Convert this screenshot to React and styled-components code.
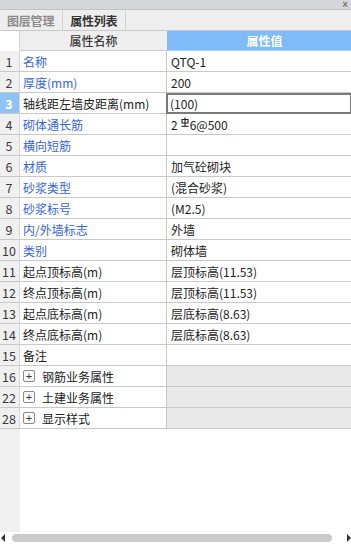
import styled, { createGlobalStyle } from "styled-components";

const Global = createGlobalStyle`
  html, body { margin: 0; padding: 0; background: #ffffff; }
  body { font-family: "Noto Sans CJK SC", "Liberation Sans", sans-serif; font-size: 12px; color: #222; }
`;

const Window = styled.div`
  width: 351px;
  height: 544px;
  display: flex;
  flex-direction: column;
  overflow: hidden;
  background: #ffffff;
`;

const TitleBar = styled.div`
  height: 9px;
  background: #d6d7db;
  border-bottom: 1px solid #c2c3c7;
  display: flex;
  justify-content: flex-end;
  align-items: center;
  padding-right: 3px;
`;

const CloseMark = styled.span`
  color: #777;
  font-size: 10px;
  font-weight: bold;
  line-height: 9px;
  font-family: "Liberation Sans", sans-serif;
`;

const TabBar = styled.div`
  height: 20px;
  background: #eeeeee;
  border-bottom: 1px solid #c9c9c9;
  display: flex;
`;

const Tab = styled.div`
  padding: 0 8px 0 7px;
  display: flex;
  align-items: center;
  font-size: 12px;
  font-weight: 700;
  color: ${(p) => (p.$active ? "#333333" : "#8c8c8c")};
  border-right: 1px solid #d2d2d2;
  letter-spacing: -0.2px;
`;

const Viewport = styled.div`
  flex: 1;
  display: flex;
  flex-direction: column;
  overflow: hidden;
`;

const Table = styled.div`
  width: 362px;
  flex: 1;
  display: flex;
  flex-direction: column;
`;

const Row = styled.div`
  display: grid;
  grid-template-columns: 20px 147px 195px;
  height: ${(p) => (p.$header ? 20 : 21)}px;
`;

const Gutter = styled.div`
  background: ${(p) => (p.$selected ? "#8fc2f6" : p.$blank ? "#ffffff" : "#f0f0f0")};
  color: ${(p) => (p.$selected ? "#ffffff" : "#3a3a3a")};
  font-weight: ${(p) => (p.$selected ? 700 : 400)};
  font-size: 12.5px;
  display: flex;
  align-items: center;
  justify-content: center;
  padding-right: 1px;
  border-bottom: 1px solid ${(p) => (p.$blank ? "#ffffff" : "#c8c8c8")};
  border-right: 1px solid #d6d6d6;
  box-sizing: border-box;
`;

const HeadCell = styled.div`
  background: ${(p) => (p.$value ? "#7fbbf8" : "#eeeeee")};
  color: ${(p) => (p.$value ? "#ffffff" : "#3a3a3a")};
  font-weight: ${(p) => (p.$value ? 700 : 500)};
  font-size: 12px;
  display: flex;
  align-items: center;
  justify-content: center;
  border-bottom: 1px solid ${(p) => (p.$value ? "#a9cff7" : "#cfcfcf")};
  box-sizing: border-box;
`;

const NameCell = styled.div`
  color: ${(p) => (p.$blue ? "#3565e0" : "#222222")};
  font-size: 12px;
  display: flex;
  align-items: center;
  gap: 7px;
  padding-left: 3px;
  border-bottom: 1px solid #c8c8c8;
  border-right: 1px solid #c8c8c8;
  box-sizing: border-box;
  white-space: nowrap;
`;

const ValueCell = styled.div`
  background: ${(p) => (p.$group ? "#e9e9e9" : "#ffffff")};
  font-size: 12px;
  color: #222;
  display: flex;
  align-items: center;
  padding-left: ${(p) => (p.$selected ? 2 : 4)}px;
  border-bottom: 1px solid #c8c8c8;
  box-sizing: border-box;
  white-space: nowrap;
  ${(p) => p.$selected && "border: 2px solid #7b7b7b; margin-left: -1px; width: 186px;"}
`;

const PlusBox = styled.span`
  width: 10px;
  height: 10px;
  border: 1px solid #8a8a8a;
  border-radius: 2px;
  display: inline-flex;
  align-items: center;
  justify-content: center;
  font-size: 11px;
  line-height: 10px;
  color: #333;
  background: #fbfbfb;
  font-family: "Liberation Sans", sans-serif;
`;

const Filler = styled.div`
  flex: 1;
  display: grid;
  grid-template-columns: 20px 1fr;
`;

const FillGutter = styled.div`
  background: #f0f0f0;
`;

const ScrollBar = styled.div`
  height: 12px;
  display: flex;
  align-items: center;
  gap: 2px;
  padding: 0 0 0 1px;
`;

const Thumb = styled.div`
  flex: 1;
  height: 8px;
  margin: 0 12px 0 4px;
  border-radius: 4px;
  background: #cacaca;
`;

const Rebar = () => (
  <svg width="8" height="10" viewBox="0 0 8 10" style={{ margin: "0 1px 4px 3px" }}>
    <path d="M4 0.5V9M1 2.5H7V6H1Z" stroke="#222" strokeWidth="1.1" fill="none" />
    <path d="M0.5 9.3H7.5" stroke="#222" strokeWidth="1.1" />
  </svg>
);

const Arrow = ({ dir }) => (
  <svg width="5" height="8" viewBox="0 0 5 8">
    <path d={dir === "left" ? "M4 0L0 4L4 8Z" : "M1 0L5 4L1 8Z"} fill="#333" />
  </svg>
);

const rows = [
  { n: 1, name: "名称", blue: true, value: "QTQ-1" },
  { n: 2, name: "厚度(mm)", blue: true, value: "200" },
  { n: 3, name: "轴线距左墙皮距离(mm)", value: "(100)", selected: true },
  { n: 4, name: "砌体通长筋", blue: true, value: "rebar" },
  { n: 5, name: "横向短筋", blue: true, value: "" },
  { n: 6, name: "材质", blue: true, value: "加气砼砌块" },
  { n: 7, name: "砂浆类型", blue: true, value: "(混合砂浆)" },
  { n: 8, name: "砂浆标号", blue: true, value: "(M2.5)" },
  { n: 9, name: "内/外墙标志", blue: true, value: "外墙" },
  { n: 10, name: "类别", blue: true, value: "砌体墙" },
  { n: 11, name: "起点顶标高(m)", value: "层顶标高(11.53)" },
  { n: 12, name: "终点顶标高(m)", value: "层顶标高(11.53)" },
  { n: 13, name: "起点底标高(m)", value: "层底标高(8.63)" },
  { n: 14, name: "终点底标高(m)", value: "层底标高(8.63)" },
  { n: 15, name: "备注", value: "" },
  { n: 16, name: "钢筋业务属性", group: true },
  { n: 22, name: "土建业务属性", group: true },
  { n: 28, name: "显示样式", group: true },
];

export default function App() {
  return (
    <Window>
      <Global />
      <TitleBar>
        <CloseMark>×</CloseMark>
      </TitleBar>
      <TabBar>
        <Tab>图层管理</Tab>
        <Tab $active>属性列表</Tab>
      </TabBar>
      <Viewport>
        <Table>
          <Row $header>
            <Gutter $blank />
            <HeadCell>属性名称</HeadCell>
            <HeadCell $value>属性值</HeadCell>
          </Row>
          {rows.map((r) => (
            <Row key={r.n}>
              <Gutter $selected={r.selected}>{r.n}</Gutter>
              <NameCell $blue={r.blue}>
                {r.group && <PlusBox>+</PlusBox>}
                {r.name}
              </NameCell>
              <ValueCell $group={r.group} $selected={r.selected}>
                {r.value === "rebar" ? (
                  <>
                    2<Rebar />6@500
                  </>
                ) : (
                  r.value
                )}
              </ValueCell>
            </Row>
          ))}
          <Filler>
            <FillGutter />
            <div />
          </Filler>
        </Table>
        <ScrollBar>
          <Arrow dir="left" />
          <Thumb />
          <Arrow dir="right" />
        </ScrollBar>
      </Viewport>
    </Window>
  );
}
